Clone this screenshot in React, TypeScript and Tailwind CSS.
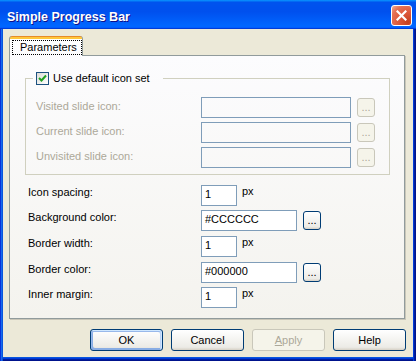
import React from "react";

function DotsButton({ disabled }: { disabled?: boolean }) {
  return (
    <div
      className={
        disabled
          ? "mt-[1px] ml-[6px] w-[18px] h-[19px] rounded-[3px] border border-[#C9C7BA] bg-[#F5F4EA] text-[#ACA899] flex items-center justify-center leading-[13px]"
          : "mt-[1px] ml-[6px] w-[18px] h-[19px] rounded-[3px] border border-[#003C74] bg-[linear-gradient(180deg,#FFFFFF,#ECEBE6_86%,#D6D0C5)] text-black flex items-center justify-center leading-[13px]"
      }
    >
      ...
    </div>
  );
}

function GroupRow({ label, mt }: { label: string; mt: string }) {
  return (
    <div className={`flex items-start ${mt}`}>
      <div className="w-[165px] mt-[3px] leading-[13px] text-[#ACA899]">{label}</div>
      <div className="w-[150px] h-[21px] border border-[#7F9DB9]" />
      <DotsButton disabled />
    </div>
  );
}

function ValueRow({
  label,
  value,
  wide,
  mt,
}: {
  label: string;
  value: string;
  wide?: boolean;
  mt: string;
}) {
  return (
    <div className={`flex items-start pl-[18px] ${mt}`}>
      <div className="w-[173px] mt-[1px] leading-[13px]">{label}</div>
      <div
        className={`${wide ? "w-[96px]" : "w-[36px]"} h-[21px] border border-[#7F9DB9] bg-white pl-[3px] leading-[17px]`}
      >
        {value}
      </div>
      {wide ? <DotsButton /> : <div className="ml-[5px] leading-[13px]">px</div>}
    </div>
  );
}

function DialogButton({
  children,
  variant,
}: {
  children: React.ReactNode;
  variant?: "default" | "disabled";
}) {
  const base =
    "w-[73px] h-[22px] rounded-[3px] border flex items-center justify-center leading-[13px]";
  if (variant === "disabled")
    return (
      <div className={`${base} border-[#C9C7BA] bg-[#F5F4EA] text-[#ACA899]`}>{children}</div>
    );
  if (variant === "default")
    return (
      <div
        className={`${base} border-[#003C74] bg-[linear-gradient(180deg,#FFFFFF,#ECEBE6_86%,#D6D0C5)] shadow-[inset_-1px_1px_#CEE7FF,inset_1px_2px_#98B8EA,inset_-2px_2px_#BCD4F6,inset_1px_-1px_#89ADE4,inset_2px_-2px_#89ADE4]`}
      >
        {children}
      </div>
    );
  return (
    <div
      className={`${base} border-[#003C74] bg-[linear-gradient(180deg,#FFFFFF,#ECEBE6_86%,#D6D0C5)]`}
    >
      {children}
    </div>
  );
}

export default function App() {
  return (
    <div className="w-[416px] h-[361px] flex flex-col font-['Liberation_Sans',Arial,sans-serif] text-[11px] text-black select-none">
      {/* Title bar */}
      <div className="h-[29px] flex items-start pl-[7px] pr-[4px] bg-[linear-gradient(180deg,#0997FF,#0053EE_8%,#0050EE_40%,#0066FF_88%,#0066FF_93%,#005BFF_95%,#003DD7_96%,#003DD7)]">
        <span className="flex-1 mt-[10px] leading-[14px] text-[12.5px] font-bold text-white [text-shadow:1px_1px_#0F1089]">
          Simple Progress Bar
        </span>
        <div className="mt-[5px] w-[21px] h-[21px] rounded-[3px] border border-white bg-[radial-gradient(circle_at_85%_85%,#C4401F_0%,#DE5A3C_45%,#E57256_75%,#F3AE98_100%)] flex items-center justify-center">
          <svg width="11" height="11" viewBox="0 0 11 11">
            <path d="M1.5 1.5 L9.5 9.5 M9.5 1.5 L1.5 9.5" stroke="#FFFFFF" strokeWidth="2.2" strokeLinecap="square" />
          </svg>
        </div>
      </div>

      {/* Client area with frame */}
      <div className="flex-1 flex flex-col bg-[#ECE9D8] px-[3px] pb-[4px] shadow-[inset_1px_0_#0831D9,inset_2px_0_#166AEE,inset_3px_0_#0855DD,inset_-1px_0_#00138C,inset_-2px_0_#001EA0,inset_-3px_0_#003BDA,inset_0_-1px_#00138C,inset_0_-2px_#001EA0,inset_0_-3px_#003BDA,inset_0_-4px_#0855DD]">
        <div className="flex-1 flex flex-col pt-[7px] pl-[6px] pr-[7px]">
          {/* Tab strip */}
          <div className="flex h-[19px]">
            <div className="relative z-10 w-[74px] h-[20px] rounded-t-[3px] border-x border-[#919B9C] bg-[linear-gradient(180deg,#E68B2C_0px,#E68B2C_1px,#FFC73C_1px,#FFC73C_3px,#FFFFFF_3px,#FCFCFE)] pt-[4px] pl-[2px]">
              <div className="h-[15px] w-[70px] border border-dotted border-black pl-[7px] flex items-center leading-[13px]">
                Parameters
              </div>
            </div>
          </div>

          {/* Tab panel */}
          <div className="w-[396px] h-[264px] border border-[#919B9C] shadow-[1px_1px_0_#C9C6B8] bg-[linear-gradient(180deg,#FCFCFE,#F4F3EE)] flex flex-col">
            <fieldset className="ml-[15px] mt-[16px] w-[365px] border border-[#D0D0BF] px-[10px] pt-[12px] pb-[6px]">
              <legend className="-ml-[3px] pl-[3px] w-[130px] h-[13px] flex items-center">
                <div className="w-[13px] h-[13px] border border-[#1C5180] bg-[linear-gradient(135deg,#DCDCD7,#FFFFFF)] flex items-center justify-center">
                  <svg width="9" height="9" viewBox="0 0 9 9">
                    <path d="M1 4 L3.5 6.5 L8 1.5" fill="none" stroke="#21A121" strokeWidth="2" />
                  </svg>
                </div>
                <span className="ml-[4px] leading-[13px]">Use default icon set</span>
              </legend>
              <GroupRow label="Visited slide icon:" mt="" />
              <GroupRow label="Current slide icon:" mt="mt-[4px]" />
              <GroupRow label="Unvisited slide icon:" mt="mt-[4px]" />
            </fieldset>

            <ValueRow label="Icon spacing:" value="1" mt="mt-[10px]" />
            <ValueRow label="Background color:" value="#CCCCCC" wide mt="mt-[4px]" />
            <ValueRow label="Border width:" value="1" mt="mt-[5px]" />
            <ValueRow label="Border color:" value="#000000" wide mt="mt-[5px]" />
            <ValueRow label="Inner margin:" value="1" mt="mt-[4px]" />
          </div>

          {/* Buttons */}
          <div className="flex justify-end gap-[8px] mt-[10px]">
            <DialogButton variant="default">OK</DialogButton>
            <DialogButton>Cancel</DialogButton>
            <DialogButton variant="disabled">
              <span>
                <span className="underline">A</span>pply
              </span>
            </DialogButton>
            <DialogButton>Help</DialogButton>
          </div>
        </div>
      </div>
    </div>
  );
}
